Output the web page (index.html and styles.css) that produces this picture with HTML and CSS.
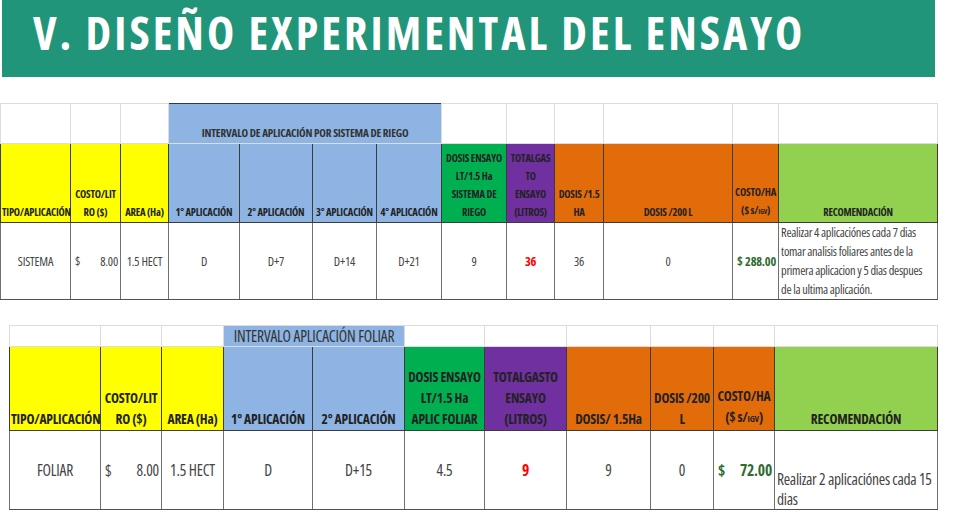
FILE: index.html
```html
<!DOCTYPE html>
<html lang="es">
<head>
<meta charset="utf-8">
<title>V. Diseño experimental del ensayo</title>
<link rel="stylesheet" href="styles.css">
</head>
<body>
<header class="banner">
  <h1 class="banner-title">V. DISEÑO EXPERIMENTAL DEL ENSAYO</h1>
</header>

<table class="grid grid-1">
  <colgroup>
    <col style="width:70px"><col style="width:50px"><col style="width:48px"><col style="width:71px"><col style="width:73px"><col style="width:64px"><col style="width:65px"><col style="width:65px"><col style="width:48px"><col style="width:49px"><col style="width:129px"><col style="width:46px"><col style="width:159px">
  </colgroup>
  <tr class="row-top">
    <td></td><td></td><td></td>
    <td class="blue group-title bold" colspan="4">INTERVALO DE APLICACIÓN POR SISTEMA DE RIEGO</td>
    <td></td><td></td><td></td><td></td><td></td><td></td>
  </tr>
  <tr class="row-head">
    <th class="yellow">TIPO/APLICACIÓN</th>
    <th class="yellow">COSTO/LIT<br>RO ($)</th>
    <th class="yellow">AREA (Ha)</th>
    <th class="blue">1° APLICACIÓN</th>
    <th class="blue">2° APLICACIÓN</th>
    <th class="blue">3° APLICACIÓN</th>
    <th class="blue">4° APLICACIÓN</th>
    <th class="green">DOSIS ENSAYO<br>LT/1.5 Ha<br>SISTEMA DE<br>RIEGO</th>
    <th class="purple">TOTALGAS<br>TO<br>ENSAYO<br>(LITROS)</th>
    <th class="orange">DOSIS /1.5<br>HA</th>
    <th class="orange">DOSIS /200 L</th>
    <th class="orange">COSTO/HA<br>($ s/<small>IGV</small>)</th>
    <th class="lime">RECOMENDACIÓN</th>
  </tr>
  <tr class="row-data">
    <td>SISTEMA</td>
    <td><span class="money"><span>$</span><span>8.00</span></span></td>
    <td>1.5 HECT</td>
    <td>D</td>
    <td>D+7</td>
    <td>D+14</td>
    <td>D+21</td>
    <td>9</td>
    <td class="red">36</td>
    <td>36</td>
    <td>0</td>
    <td class="cash"><span class="money"><span>$</span><span>288.00</span></span></td>
    <td class="note note-top">Realizar 4 aplicaciónes cada 7 dias<br>tomar analisis foliares antes de la<br>primera aplicacion y 5 dias despues<br>de la ultima aplicación.</td>
  </tr>
</table>

<table class="grid grid-2">
  <colgroup>
    <col style="width:91px"><col style="width:61px"><col style="width:62px"><col style="width:89px"><col style="width:92px"><col style="width:80px"><col style="width:82px"><col style="width:84px"><col style="width:63px"><col style="width:61px"><col style="width:163px">
  </colgroup>
  <tr class="row-top">
    <td></td><td></td><td></td>
    <td class="blue group-title" colspan="2">INTERVALO APLICACIÓN FOLIAR</td>
    <td></td><td></td><td></td><td></td><td></td><td></td>
  </tr>
  <tr class="row-head">
    <th class="yellow">TIPO/APLICACIÓN</th>
    <th class="yellow">COSTO/LIT<br>RO ($)</th>
    <th class="yellow">AREA (Ha)</th>
    <th class="blue">1° APLICACIÓN</th>
    <th class="blue">2° APLICACIÓN</th>
    <th class="green">DOSIS ENSAYO<br>LT/1.5 Ha<br>APLIC FOLIAR</th>
    <th class="purple">TOTALGASTO<br>ENSAYO<br>(LITROS)</th>
    <th class="orange">DOSIS/ 1.5Ha</th>
    <th class="orange">DOSIS /200<br>L</th>
    <th class="orange">COSTO/HA<br>($ s/<small>IGV</small>)</th>
    <th class="lime">RECOMENDACIÓN</th>
  </tr>
  <tr class="row-data">
    <td>FOLIAR</td>
    <td><span class="money"><span>$</span><span>8.00</span></span></td>
    <td>1.5 HECT</td>
    <td>D</td>
    <td>D+15</td>
    <td>4.5</td>
    <td class="red">9</td>
    <td>9</td>
    <td>0</td>
    <td class="cash"><span class="money"><span>$</span><span>72.00</span></span></td>
    <td class="note note-bottom">Realizar 2 aplicaciónes cada 15<br>dias</td>
  </tr>
</table>
</body>
</html>
```

FILE: styles.css
```css
html, body {
  margin: 0;
  padding: 0;
  background: #ffffff;
}

body {
  width: 957px;
  height: 523px;
  overflow: hidden;
  font-family: "Open Sans", "DejaVu Sans Condensed", sans-serif;
  font-stretch: 75%;
}

.banner {
  margin-left: 2px;
  width: 933px;
  height: 77px;
  background: #21957a;
  display: flex;
  align-items: flex-start;
}

.banner-title {
  margin: 0;
  padding: 6px 0 0 31px;
  color: #ffffff;
  font-family: "Open Sans", "DejaVu Sans Condensed", sans-serif;
  font-stretch: 87.5%;
  font-weight: bold;
  font-size: 46px;
  line-height: 53px;
  letter-spacing: 3px;
  white-space: nowrap;
}

.grid {
  border-collapse: collapse;
  table-layout: fixed;
  color: #222222;
}

.grid-1 {
  width: 937px;
  margin-top: 26px;
  margin-left: 0;
  font-size: 10.5px;
  letter-spacing: -0.2px;
}

.grid-2 {
  width: 928px;
  margin-top: 25px;
  margin-left: 9px;
  font-size: 13.5px;
  letter-spacing: -0.2px;
}

.grid td, .grid th {
  padding: 0 1px;
  text-align: center;
  white-space: nowrap;
  overflow: visible;
}

.row-top td {
  border: 1px solid #dcdcdc;
  vertical-align: bottom;
}

.grid-1 .row-top { height: 40px; }
.grid-2 .row-top { height: 21px; }

.grid-1 .row-top td { padding-bottom: 3px; line-height: 14px; }
.grid-2 .row-top td { padding-bottom: 0; line-height: 19px; }

.grid-1 .group-title {
  font-size: 11.2px;
  border-top-color: #2a3a4a;
  border-left-color: #2a3a4a;
}
.grid-2 .group-title { font-size: 15.5px; }

.group-title {
  color: #333333;
}

.row-head th {
  border: 1px solid #3c3c3c;
  vertical-align: bottom;
  font-weight: bold;
  color: #222222;
}

.grid-1 .row-head { height: 79px; }
.grid-1 .row-head th { line-height: 18px; padding-bottom: 1px; }
.grid-2 .row-head { height: 84px; }
.grid-2 .row-head th { line-height: 21px; padding-bottom: 0; }

.row-data td {
  border-left: 1px solid #707070;
  border-right: 1px solid #707070;
  border-top: 1px solid #3c3c3c;
  border-bottom: 1px solid #505050;
  color: #444444;
  vertical-align: middle;
}

.grid-1 .row-data { height: 74px; font-size: 12.4px; }
.grid-2 .row-data { height: 79px; font-size: 15.5px; }

.bold { font-weight: bold; }

small {
  font-size: 0.65em;
}

.yellow { background: #ffff00; }
.blue { background: #8db4e2; }
.green { background: #00b050; }
.purple { background: #7030a0; }
.orange { background: #e26b0a; }
.lime { background: #92d050; }

.red {
  color: #ff0000 !important;
  font-weight: bold;
}

.money {
  display: flex;
  justify-content: space-between;
  padding: 0 1px 0 3px;
}

.cash {
  color: #2f6b2f !important;
  font-weight: bold;
}

.note {
  text-align: left !important;
  padding: 0 2px !important;
  color: #444444;
}

.grid-1 .note-top {
  vertical-align: top !important;
  line-height: 19px;
  letter-spacing: -0.3px;
}

.grid-2 .note-bottom {
  vertical-align: bottom !important;
  line-height: 20px;
  padding-bottom: 0 !important;
  letter-spacing: -0.3px;
}
```
